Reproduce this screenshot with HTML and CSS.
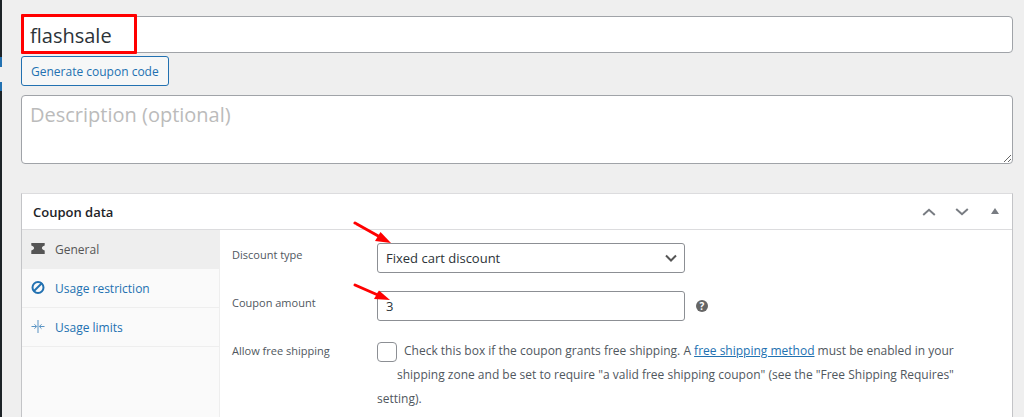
FILE: index.html
```html
<!DOCTYPE html>
<html lang="en">
<head>
  <meta charset="UTF-8">
  <title>Edit coupon</title>
  <link rel="stylesheet" href="styles.css">
</head>
<body>
  <!-- Collapsed admin menu -->
  <div class="menu-edge">
    <div class="menu-current"></div>
  </div>

  <main class="content">
    <div class="title-wrap">
      <input type="text" class="title-input" id="couponCode" aria-label="Coupon code" value="flashsale">
      <div class="highlight"></div>
    </div>
    <button type="button" class="generate-btn">Generate coupon code</button>
    <textarea class="description" aria-label="Description" placeholder="Description (optional)"></textarea>

    <section class="panel">
      <header class="panel-header">
        <h2>Coupon data</h2>
        <div class="panel-actions">
          <button type="button" aria-label="Move up">
            <svg width="14" height="14" viewBox="0 0 14 14"><path d="M1.200 10 7 4.800l5.800 5.200" fill="none" stroke="#787c82" stroke-width="2"/></svg>
          </button>
          <button type="button" aria-label="Move down">
            <svg width="14" height="14" viewBox="0 0 14 14"><path d="M1.200 4 7 9.200 12.800 4" fill="none" stroke="#787c82" stroke-width="2"/></svg>
          </button>
          <button type="button" aria-label="Toggle panel">
            <svg width="14" height="14" viewBox="0 0 14 14"><path d="M7 3l4 6H3z" fill="#787c82"/></svg>
          </button>
        </div>
      </header>

      <div class="panel-body">
        <nav class="tabs">
          <a href="#general" class="tab active">
            <svg width="14" height="14" viewBox="0 0 14 14"><path d="M.3 1h13.400v2.500c-1.600.4-2.800 1.300-2.800 2.500s1.200 2.100 2.800 2.500V12H.3V8.500C1.900 8.100 3.100 7.200 3.100 6S1.900 3.900.3 3.500z" fill="#555"/></svg>
            General
          </a>
          <a href="#restriction" class="tab">
            <svg width="14" height="14" viewBox="0 0 14 14"><path d="M3 10 11 2" stroke="#2271b1" stroke-width="2"/><circle cx="7" cy="6.500" r="5.500" fill="none" stroke="#2271b1" stroke-width="2"/></svg>
            Usage restriction
          </a>
          <a href="#limits" class="tab">
            <svg width="14" height="14" viewBox="0 0 14 14"><g fill="none" stroke="#2271b1" opacity=".75"><path d="M7 0v13M.5 6.500h5M8.500 6.500h5"/><path d="M3.500 4.300 5.700 6.500 3.500 8.700M10.500 4.300 8.300 6.500l2.200 2.200"/></g></svg>
            Usage limits
          </a>
        </nav>

        <form class="fields" id="general">
          <div class="field">
            <label for="discountType">Discount type</label>
            <div class="control">
              <select id="discountType">
                <option>Fixed cart discount</option>
                <option>Percentage discount</option>
                <option>Fixed product discount</option>
              </select>
              <svg class="chevron" width="12" height="12" viewBox="0 0 12 12"><path d="M1 3.500l5 5 5-5" fill="none" stroke="#555" stroke-width="2"/></svg>
              <svg class="arrow" width="40" height="24" viewBox="0 0 40 24"><path d="M2 2l25 14" stroke="#f00" stroke-width="3" stroke-linecap="round"/><path d="M27.500 11 38 22l-16-2z" fill="#f00"/></svg>
            </div>
          </div>

          <div class="field">
            <label for="couponAmount">Coupon amount</label>
            <div class="control">
              <input type="text" id="couponAmount" value="3">
              <svg class="arrow arrow-amount" width="40" height="24" viewBox="0 0 40 24"><path d="M2 2l24 10.500" stroke="#f00" stroke-width="3" stroke-linecap="round"/><path d="M26 7.500 37 17l-16-1z" fill="#f00"/></svg>
            </div>
            <span class="help">?</span>
          </div>

          <div class="field">
            <label for="freeShipping">Allow free shipping</label>
            <div class="check">
              <input type="checkbox" id="freeShipping">
              <span class="check-text">Check this box if the coupon grants free shipping. A <a href="#shipping">free shipping method</a> must be enabled in your shipping zone and be set to require "a valid free shipping coupon" (see the "Free Shipping Requires" setting).</span>
            </div>
          </div>
        </form>
      </div>
    </section>
  </main>
</body>
</html>
```
FILE: styles.css
```css
* {
  box-sizing: border-box;
}
body {
  margin: 0;
  min-height: 100vh;
  display: flex;
  background-color: #efefef;
  color: #2c3338;
  font-family: "Open Sans", "Noto Sans", sans-serif;
  font-size: 12px;
}
input,
select,
textarea,
button {
  font-family: inherit;
  margin: 0;
}
svg {
  display: block;
}

/* Menu strip on the left */
.menu-edge {
  width: 2px;
  padding-top: 57px;
  background-color: #1d2327;
}
.menu-current {
  height: 34px;
  border: solid #2271b1;
  border-width: 10px 0 9px;
  background-color: #efefef;
}

.content {
  flex: 1;
  display: flex;
  flex-direction: column;
  align-items: stretch;
  padding: 16px 11px 0 19px;
}
.title-wrap {
  position: relative;
}
.title-input,
.description {
  display: block;
  width: 100%;
  padding: 2px 8px 0;
  border: 1px solid #a0a3a8;
  border-radius: 4px;
  background-color: #fff;
  color: #2c3338;
  font-size: 20px;
}
.title-input {
  height: 37px;
}
.highlight {
  position: absolute;
  top: -2px;
  left: 0;
  width: 116px;
  height: 40px;
  border: 3px solid #f00;
  border-radius: 1px;
  pointer-events: none;
}
.generate-btn {
  align-self: flex-start;
  height: 30px;
  margin: 3px 0 9px;
  padding: 0 9px;
  border: 1px solid #2271b1;
  border-radius: 3px;
  background-color: #f6f7f7;
  color: #2271b1;
  font-size: 12px;
}
.description {
  height: 69px;
  padding-top: 5px;
}
.description::placeholder {
  color: #bbb;
}

/* Coupon data box */
.panel {
  flex: 1;
  display: flex;
  flex-direction: column;
  margin-top: 29px;
  border: 1px solid #c3c4c7;
  border-top-color: #dcdcde;
  border-bottom: 0;
  background-color: #fff;
}
.panel-header {
  display: flex;
  align-items: center;
  justify-content: space-between;
  height: 36px;
  padding: 0 10px 0 11px;
  border-bottom: 1px solid #dcdcde;
}
.panel-header h2 {
  margin: 0;
  color: #1d2327;
  font-size: 13px;
  font-weight: 600;
}
.panel-actions {
  display: flex;
  gap: 19px;
}
.panel-actions button {
  padding: 0;
  border: 0;
  background: none;
}
.panel-body {
  flex: 1;
  display: flex;
}

.tabs {
  flex: 0 0 20%;
  border-right: 1px solid #eee;
  background-color: #fafafa;
}
.tab {
  display: flex;
  align-items: center;
  gap: 10px;
  height: 39px;
  padding: 0 9px;
  border-bottom: 1px solid #eee;
  color: #2271b1;
  text-decoration: none;
}
.tab.active {
  background-color: #eee;
  color: #555;
}

.fields {
  flex: 1;
  display: flex;
  flex-direction: column;
  gap: 18px;
  padding: 13px 48px 0 12px;
}
.field {
  display: flex;
  color: #50575e;
  line-height: 24px;
}
.field > label {
  flex: 0 0 145px;
  font-size: 11px;
}
.control {
  position: relative;
  flex: 0 1 308px;
}
.control select,
.control input {
  display: block;
  width: 100%;
  height: 30px;
  padding: 0 8px;
  border: 1px solid #8c8f94;
  border-radius: 3px;
  background-color: #fff;
  color: #2c3338;
  font-size: 13px;
  appearance: none;
}
.chevron {
  position: absolute;
  top: 9px;
  right: 8px;
  pointer-events: none;
}
.arrow {
  position: absolute;
  top: -22px;
  left: -24px;
  pointer-events: none;
}
.arrow-amount {
  top: -8px;
}
.help {
  align-self: center;
  width: 12px;
  height: 12px;
  margin-left: 11px;
  border-radius: 50%;
  background-color: #666;
  color: #fff;
  font-size: 10px;
  font-weight: 700;
  line-height: 12px;
  text-align: center;
}
.check {
  flex: 1;
}
.check input {
  float: left;
  width: 20px;
  height: 20px;
  margin: 3px 0 4px;
  border: 1px solid #8c8f94;
  border-radius: 4px;
  background-color: #fff;
  appearance: none;
}
.check-text {
  margin-left: 7px;
}
.check-text a {
  color: #2271b1;
}
```
